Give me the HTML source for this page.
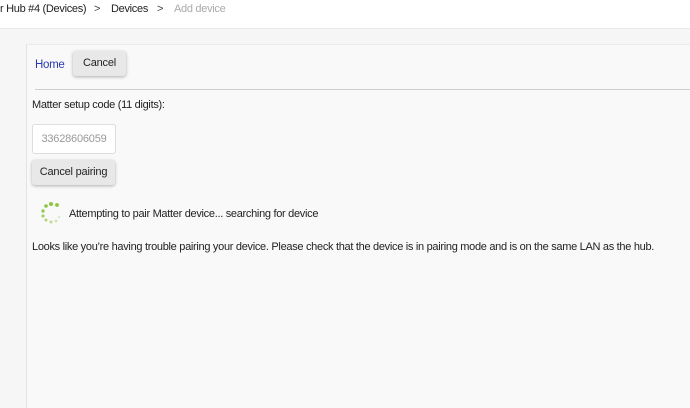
<!DOCTYPE html>
<html><head><style>
body{margin:0;width:690px;height:407px;overflow:hidden;background:#f6f6f6;font-family:"Liberation Sans",sans-serif;color:#222;position:relative}
.top{position:absolute;left:0;top:0;width:690px;height:28px;background:#fff;border-bottom:1px solid #e8e8ee;font-size:11px;letter-spacing:-0.3px}
.top span{position:absolute;top:3px;white-space:nowrap}
.panel{position:absolute;left:26px;top:44px;width:664px;height:363px;background:#f9f9f9;border-left:1px solid #e2e2e2;border-top:1px solid #ececec}
.btn{position:absolute;background:#e8e8e8;border-radius:3px;box-shadow:0 1px 3px rgba(0,0,0,.3);font-size:11px;letter-spacing:-0.2px;text-align:center;color:#222}
.t{position:absolute;font-size:11px;letter-spacing:-0.3px;white-space:nowrap}
</style></head><body>
<div class="top">
<span style="left:0">r Hub #4 (Devices)</span>
<span style="left:94px;color:#444">&gt;</span>
<span style="left:111px">Devices</span>
<span style="left:157px;color:#444">&gt;</span>
<span style="left:174px;color:#aaa">Add device</span>
</div>
<div class="panel"></div>
<div class="t" style="left:35px;top:59px;color:#2a3bb0;font-size:11.5px">Home</div>
<div class="btn" style="left:73px;top:51px;width:53px;height:25px;line-height:25px">Cancel</div>
<div style="position:absolute;left:35px;top:89px;width:655px;height:1px;background:#cfcfcf"></div>
<div class="t" style="left:32px;top:99px">Matter setup code (11 digits):</div>
<div style="position:absolute;left:32px;top:124px;width:82px;height:28px;background:#fff;border:1px solid #ddd;border-radius:3px;font-size:11px;letter-spacing:-0.2px;color:#999;line-height:28px;text-align:center">33628606059</div>
<div class="btn" style="left:32px;top:160px;width:83px;height:25px;line-height:25px">Cancel pairing</div>
<svg style="position:absolute;left:38px;top:200px" width="26" height="26" viewBox="0 0 26 26">
<g fill="#8cc63f">
<circle cx="13" cy="4" r="2"/><circle cx="19" cy="5" r="1.9"/><circle cx="8" cy="6" r="1.8"/><circle cx="5" cy="11" r="1.7" opacity=".9"/><circle cx="5" cy="16" r="1.6" opacity=".8"/><circle cx="8" cy="20" r="1.5" opacity=".7"/><circle cx="13" cy="22" r="1.5" opacity=".55"/><circle cx="18" cy="21" r="1.4" opacity=".4"/><circle cx="21" cy="17" r="1.3" opacity=".25"/>
</g></svg>
<div class="t" style="left:69px;top:208px">Attempting to pair Matter device... searching for device</div>
<div class="t" style="left:32px;top:241px">Looks like you’re having trouble pairing your device. Please check that the device is in pairing mode and is on the same LAN as the hub.</div>
</body></html>
